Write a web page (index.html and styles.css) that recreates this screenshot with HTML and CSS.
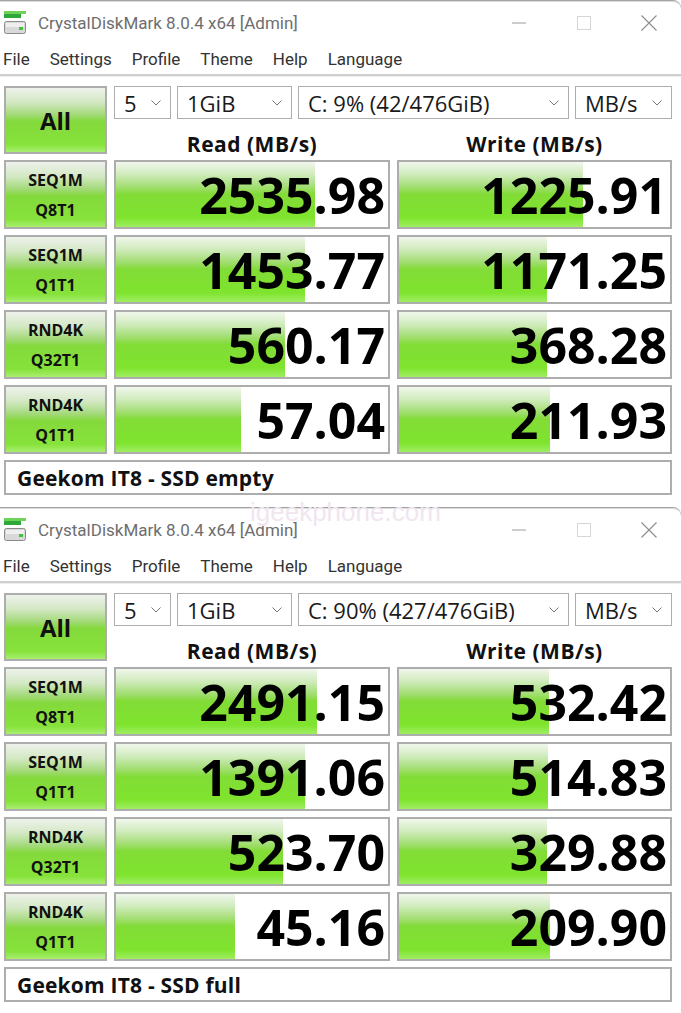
FILE: index.html
```html
<!DOCTYPE html>
<html lang="en">
<head>
<meta charset="utf-8">
<title>CrystalDiskMark</title>
<link rel="stylesheet" href="styles.css">
</head>
<body>
<div class="win">
  <div class="titlebar">
    <svg class="appicon" width="22" height="24" viewBox="0 0 22 24">
      <rect x="0" y="0" width="22" height="3" fill="#6fd35a"/>
      <rect x="0" y="3" width="17" height="4" fill="#2fa83a"/>
      <rect x="0.5" y="10.5" width="21" height="12" rx="2" fill="#d9d9d9" stroke="#8a8a8a"/>
      <rect x="2" y="12" width="18" height="4" fill="#efefef"/>
      <rect x="15" y="16" width="4" height="3" fill="#3fc43a"/>
    </svg>
    <span class="title">CrystalDiskMark 8.0.4 x64 [Admin]</span>
    <div class="wctrls">
      <span class="wbtn"><svg width="14" height="2" viewBox="0 0 14 2"><line x1="0" y1="1" x2="14" y2="1" stroke="#9a9a9a" stroke-width="1"/></svg></span>
      <span class="wbtn"><svg width="14" height="14" viewBox="0 0 14 14"><rect x="0.5" y="0.5" width="13" height="13" fill="none" stroke="#d6d6d6"/></svg></span>
      <span class="wbtn"><svg width="16" height="16" viewBox="0 0 16 16"><path d="M0.5 0.5 L15.5 15.5 M15.5 0.5 L0.5 15.5" stroke="#8c8c8c" stroke-width="1.1" fill="none"/></svg></span>
    </div>
  </div>
  <div class="menubar">
    <span>File</span><span>Settings</span><span>Profile</span><span>Theme</span><span>Help</span><span>Language</span>
  </div>
  <div class="content">
    <div class="btn all">All</div>
    <div class="selects">
      <div class="sel s1"><span>5</span><svg width="10" height="6" viewBox="0 0 10 6"><polyline points="0.5,0.5 5,5 9.5,0.5" fill="none" stroke="#777"/></svg></div>
      <div class="sel s2"><span>1GiB</span><svg width="10" height="6" viewBox="0 0 10 6"><polyline points="0.5,0.5 5,5 9.5,0.5" fill="none" stroke="#777"/></svg></div>
      <div class="sel s3"><span>C: 9% (42/476GiB)</span><svg width="10" height="6" viewBox="0 0 10 6"><polyline points="0.5,0.5 5,5 9.5,0.5" fill="none" stroke="#777"/></svg></div>
      <div class="sel s4"><span>MB/s</span><svg width="10" height="6" viewBox="0 0 10 6"><polyline points="0.5,0.5 5,5 9.5,0.5" fill="none" stroke="#777"/></svg></div>
    </div>
    <div class="hdr">Read (MB/s)</div>
    <div class="hdr">Write (MB/s)</div>

    <div class="btn label">SEQ1M<br>Q8T1</div>
    <div class="val" style="--w:199px">2535.98</div>
    <div class="val" style="--w:184px">1225.91</div>

    <div class="btn label">SEQ1M<br>Q1T1</div>
    <div class="val" style="--w:189px">1453.77</div>
    <div class="val" style="--w:148px">1171.25</div>

    <div class="btn label">RND4K<br>Q32T1</div>
    <div class="val" style="--w:169px">560.17</div>
    <div class="val" style="--w:148px">368.28</div>

    <div class="btn label">RND4K<br>Q1T1</div>
    <div class="val" style="--w:125px">57.04</div>
    <div class="val" style="--w:151px">211.93</div>

    <div class="comment">Geekom IT8 - SSD empty</div>
  </div>
</div>

<div class="win">
  <div class="titlebar">
    <svg class="appicon" width="22" height="24" viewBox="0 0 22 24">
      <rect x="0" y="0" width="22" height="3" fill="#6fd35a"/>
      <rect x="0" y="3" width="17" height="4" fill="#2fa83a"/>
      <rect x="0.5" y="10.5" width="21" height="12" rx="2" fill="#d9d9d9" stroke="#8a8a8a"/>
      <rect x="2" y="12" width="18" height="4" fill="#efefef"/>
      <rect x="15" y="16" width="4" height="3" fill="#3fc43a"/>
    </svg>
    <span class="title">CrystalDiskMark 8.0.4 x64 [Admin]</span>
    <div class="wctrls">
      <span class="wbtn"><svg width="14" height="2" viewBox="0 0 14 2"><line x1="0" y1="1" x2="14" y2="1" stroke="#9a9a9a" stroke-width="1"/></svg></span>
      <span class="wbtn"><svg width="14" height="14" viewBox="0 0 14 14"><rect x="0.5" y="0.5" width="13" height="13" fill="none" stroke="#d6d6d6"/></svg></span>
      <span class="wbtn"><svg width="16" height="16" viewBox="0 0 16 16"><path d="M0.5 0.5 L15.5 15.5 M15.5 0.5 L0.5 15.5" stroke="#8c8c8c" stroke-width="1.1" fill="none"/></svg></span>
    </div>
  </div>
  <div class="menubar">
    <span>File</span><span>Settings</span><span>Profile</span><span>Theme</span><span>Help</span><span>Language</span>
  </div>
  <div class="content">
    <div class="btn all">All</div>
    <div class="selects">
      <div class="sel s1"><span>5</span><svg width="10" height="6" viewBox="0 0 10 6"><polyline points="0.5,0.5 5,5 9.5,0.5" fill="none" stroke="#777"/></svg></div>
      <div class="sel s2"><span>1GiB</span><svg width="10" height="6" viewBox="0 0 10 6"><polyline points="0.5,0.5 5,5 9.5,0.5" fill="none" stroke="#777"/></svg></div>
      <div class="sel s3"><span>C: 90% (427/476GiB)</span><svg width="10" height="6" viewBox="0 0 10 6"><polyline points="0.5,0.5 5,5 9.5,0.5" fill="none" stroke="#777"/></svg></div>
      <div class="sel s4"><span>MB/s</span><svg width="10" height="6" viewBox="0 0 10 6"><polyline points="0.5,0.5 5,5 9.5,0.5" fill="none" stroke="#777"/></svg></div>
    </div>
    <div class="hdr">Read (MB/s)</div>
    <div class="hdr">Write (MB/s)</div>

    <div class="btn label">SEQ1M<br>Q8T1</div>
    <div class="val" style="--w:201px">2491.15</div>
    <div class="val" style="--w:150px">532.42</div>

    <div class="btn label">SEQ1M<br>Q1T1</div>
    <div class="val" style="--w:189px">1391.06</div>
    <div class="val" style="--w:149px">514.83</div>

    <div class="btn label">RND4K<br>Q32T1</div>
    <div class="val" style="--w:167px">523.70</div>
    <div class="val" style="--w:148px">329.88</div>

    <div class="btn label">RND4K<br>Q1T1</div>
    <div class="val" style="--w:119px">45.16</div>
    <div class="val" style="--w:151px">209.90</div>

    <div class="comment">Geekom IT8 - SSD full</div>
  </div>
</div>

<div class="watermark">igeekphone.com</div>
</body>
</html>
```

FILE: styles.css
```css
html, body {
  margin: 0;
  padding: 0;
  background: #ffffff;
}

body {
  width: 681px;
  height: 1013px;
  overflow: hidden;
  position: relative;
  font-family: Roboto, "Noto Sans", sans-serif;
}

.win {
  box-sizing: border-box;
  height: 507px;
  border-top: 1px solid #a3a3a3;
  box-shadow: inset 0 1px 0 #dcdcdc;
  border-top-right-radius: 8px;
  background: #fff;
}

.titlebar {
  height: 42px;
  display: flex;
  align-items: center;
  padding-left: 4px;
  padding-top: 1px;
  box-sizing: border-box;
}

.appicon {
  flex: none;
  display: block;
}

.title {
  margin-left: 12px;
  font-size: 17px;
  color: #6e6e6e;
  white-space: nowrap;
}

.wctrls {
  margin-left: auto;
  display: flex;
  height: 100%;
}

.wbtn {
  width: 65px;
  display: flex;
  align-items: center;
  justify-content: center;
}

.wbtn svg {
  display: block;
}

.menubar {
  height: 31px;
  display: flex;
  align-items: center;
  gap: 20px;
  padding-left: 3px;
  font-size: 17px;
  color: #333;
  border-bottom: 2px solid #cfcfcf;
  box-shadow: 0 1px 0 #ededed;
}

.content {
  display: grid;
  grid-template-columns: 103px 276px 275px;
  grid-template-rows: 33px 29px repeat(4, 69px) 35px;
  column-gap: 7px;
  row-gap: 6px;
  padding: 10px 0 0 4px;
}

.btn {
  box-sizing: border-box;
  border: 2px solid #adadad;
  background: linear-gradient(#eef2eb 0%, #d3e8c4 22%, #a2d977 42%, #84d93c 52%, #86e33a 88%, #a9ee70 100%);
  display: flex;
  align-items: center;
  justify-content: center;
  text-align: center;
  font-family: "Open Sans", "Noto Sans", sans-serif;
  font-weight: 700;
  color: #111;
}

.all {
  grid-row: 1 / span 2;
  font-size: 24px;
}

.label {
  font-size: 16px;
  line-height: 30px;
}

.selects {
  grid-column: 2 / span 2;
  display: flex;
  gap: 6px;
}

.sel {
  box-sizing: border-box;
  height: 33px;
  border: 1px solid #adadad;
  background: #fff;
  display: flex;
  align-items: center;
  justify-content: space-between;
  padding: 0 9px 0 9px;
  font-family: "Open Sans", "Noto Sans", sans-serif;
  font-size: 22px;
  color: #1a1a1a;
  white-space: nowrap;
}

.sel svg {
  display: block;
  flex: none;
}

.s1 { width: 57px; }
.s2 { width: 115px; }
.s3 { width: 271px; }
.s4 { width: 97px; }

.hdr {
  text-align: center;
  font-family: "Open Sans", "Noto Sans", sans-serif;
  font-weight: 700;
  font-size: 21px;
  letter-spacing: 0.5px;
  line-height: 25px;
  padding-top: 7px;
  color: #111;
}

.val {
  box-sizing: border-box;
  border: 2px solid #adadad;
  background:
    linear-gradient(#f1f7ec 0%, #d2ecbf 18%, #a3de74 38%, #82dc36 50%, #7fe42e 86%, #9fee62 100%) no-repeat 0 0 / var(--w) 100%,
    #ffffff;
  display: flex;
  align-items: center;
  justify-content: flex-end;
  padding-right: 3px;
  padding-top: 1px;
  font-family: "Open Sans", "Noto Sans", sans-serif;
  font-weight: 700;
  font-size: 50px;
  line-height: 1;
  color: #000;
}

.comment {
  grid-column: 1 / span 3;
  box-sizing: border-box;
  border: 2px solid #adadad;
  background: #fff;
  display: flex;
  align-items: center;
  padding-left: 11px;
  padding-top: 1px;
  font-family: "Open Sans", "Noto Sans", sans-serif;
  font-weight: 700;
  font-size: 21px;
  letter-spacing: 0.2px;
  color: #111;
}

.watermark {
  position: absolute;
  left: 250px;
  top: 497px;
  font-family: "Liberation Sans", Arial, sans-serif;
  font-size: 26px;
  color: #f1e6f0;
  pointer-events: none;
}
```
